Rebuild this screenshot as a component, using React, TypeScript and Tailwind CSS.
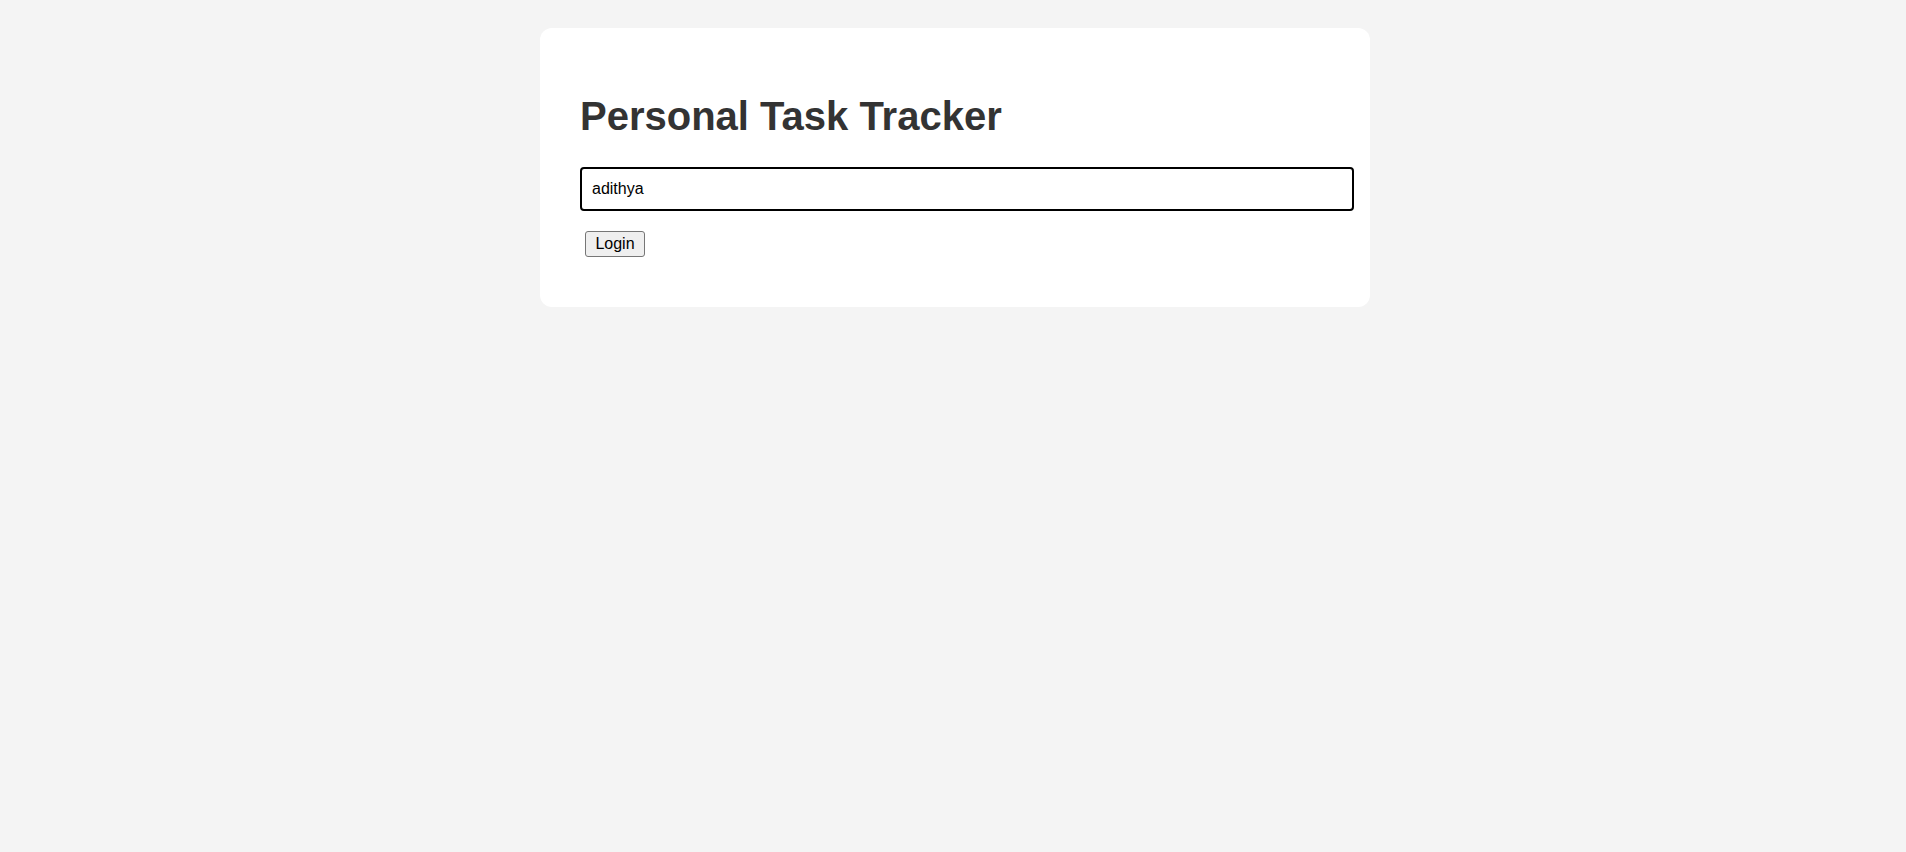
import React from "react";

export default function App() {
  return (
    <div className="min-h-[852px] w-full bg-[#f4f4f4] pt-[28px] pl-[4px] flex justify-center items-start" style={{ fontFamily: '"Liberation Sans", Arial, sans-serif' }}>
      <div className="w-[830px] h-[279px] bg-white rounded-[12px] px-[40px] pt-[65px] flex flex-col items-start">
        <h1 className="text-[40px] font-bold text-[#333333] leading-[46px] m-0">Personal Task Tracker</h1>
        <input
          type="text"
          defaultValue="adithya"
          className="mt-[28px] w-[774px] h-[44px] border-2 border-black rounded-[4px] px-[10px] text-[16px] text-black outline-none bg-white"
        />
        <button className="mt-[20px] ml-[5px] w-[60px] h-[26px] bg-[#efefef] border border-[#767676] rounded-[3px] text-[16px] text-black leading-none">
          Login
        </button>
      </div>
    </div>
  );
}
